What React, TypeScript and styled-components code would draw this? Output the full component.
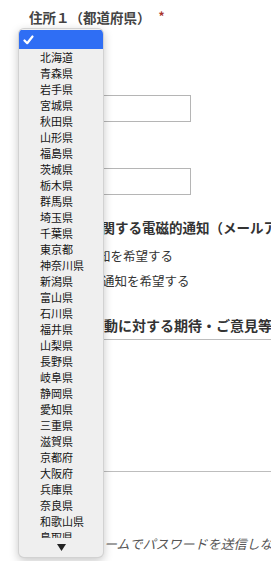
import styled, { createGlobalStyle } from 'styled-components'

const GlobalStyle = createGlobalStyle`
  html, body {
    margin: 0;
    padding: 0;
    background: #fff;
    overflow: hidden;
  }
  body {
    font-family: "Noto Sans CJK JP", "Noto Sans", sans-serif;
    color: #333;
  }
`

const Page = styled.div`
  position: relative;
  width: 271px;
  height: 561px;
  overflow: hidden;
`

const Form = styled.form`
  display: flex;
  flex-direction: column;
  gap: 22px;
  padding: 6px 0 0 29px;
  width: 400px;
`

const Field = styled.div`
  display: flex;
  flex-direction: column;
  gap: 4px;
`

const Label = styled.div`
  font-size: 13.5px;
  line-height: 20px;
  font-weight: 700;
  color: #444;
  white-space: nowrap;
`

const Required = styled.span`
  color: #a8352b;
  font-size: 12px;
  margin-left: 8px;
  vertical-align: 2px;
`

const SelectBox = styled.div`
  width: 60px;
  height: 18px;
  border: 1px solid #bbb;
  border-radius: 4px;
  box-sizing: border-box;
`

const TextInput = styled.input`
  width: 162px;
  height: 27px;
  box-sizing: border-box;
  border: 1px solid #b5b5b5;
  background: #fff;
  padding: 0 6px;
`

const Heading = styled.div<{ $size?: number; $indent?: number }>`
  font-size: ${({ $size }) => $size ?? 13.5}px;
  line-height: 20px;
  font-weight: 700;
  color: #333;
  white-space: nowrap;
  padding-left: ${({ $indent }) => $indent ?? 0}px;
`

const Options = styled.div`
  display: flex;
  flex-direction: column;
  margin-top: 2px;
`

const Option = styled.label<{ $indent?: number }>`
  display: flex;
  align-items: center;
  height: 25px;
  font-size: 12.5px;
  color: #333;
  white-space: nowrap;
  padding-left: ${({ $indent }) => $indent ?? 0}px;
`

const Radio = styled.span`
  width: 13px;
  height: 13px;
  box-sizing: border-box;
  border: 1px solid #999;
  border-radius: 50%;
  margin-right: 4px;
  flex: none;
`

const TextArea = styled.textarea`
  width: 320px;
  height: 133px;
  box-sizing: border-box;
  border: 1px solid #bdbdbd;
  resize: none;
  background: #fff;
`

const Note = styled.div`
  font-size: 13px;
  line-height: 20px;
  font-style: italic;
  color: #555;
  white-space: nowrap;
  padding-left: 10px;
  margin-top: 16px;
`

// open native-like popup list for the prefecture select
const Menu = styled.div`
  position: absolute;
  left: 18px;
  top: 28px;
  width: 86px;
  height: 530px;
  box-sizing: border-box;
  padding: 1px 0;
  background: #efefef;
  border: 1px solid rgba(0, 0, 0, 0.12);
  border-radius: 6px;
  box-shadow: 0 3px 10px rgba(0, 0, 0, 0.22);
  display: flex;
  flex-direction: column;
  overflow: hidden;
`

const List = styled.div`
  height: 508px;
  overflow: hidden;
  display: flex;
  flex-direction: column;
`

const Item = styled.div<{ $selected?: boolean }>`
  flex: none;
  display: flex;
  align-items: center;
  height: ${({ $selected }) => ($selected ? 19 : 16)}px;
  padding-left: ${({ $selected }) => ($selected ? 4 : 21)}px;
  font-size: 11px;
  color: #151515;
  background: ${({ $selected }) => ($selected ? '#2f6ef4' : 'transparent')};
  white-space: nowrap;
`

const ScrollArrow = styled.div`
  flex: 1;
  display: flex;
  align-items: center;
  justify-content: center;
`

const prefectures = [
  '北海道', '青森県', '岩手県', '宮城県', '秋田県', '山形県', '福島県', '茨城県',
  '栃木県', '群馬県', '埼玉県', '千葉県', '東京都', '神奈川県', '新潟県', '富山県',
  '石川県', '福井県', '山梨県', '長野県', '岐阜県', '静岡県', '愛知県', '三重県',
  '滋賀県', '京都府', '大阪府', '兵庫県', '奈良県', '和歌山県', '鳥取県', '島根県',
]

export default function App() {
  return (
    <Page>
      <GlobalStyle />
      <Form>
        <Field>
          <Label>
            住所１（都道府県）<Required>*</Required>
          </Label>
          <SelectBox />
        </Field>
        <Field>
          <Label>住所２</Label>
          <TextInput />
        </Field>
        <Field>
          <Label>住所３</Label>
          <TextInput />
        </Field>
        <Field>
          <Heading $indent={5}>総会招集に関する電磁的通知（メールアドレス）</Heading>
          <Options>
            <Option $indent={2}>
              <Radio />
              メール通知を希望する
            </Option>
            <Option $indent={6}>
              <Radio />
              書面での通知を希望する
            </Option>
          </Options>
        </Field>
        <Field>
          <Heading $size={14} $indent={5}>本会の諸活動に対する期待・ご意見等</Heading>
          <TextArea />
        </Field>
        <Field>
          <Heading>パスワード</Heading>
          <Note>※このフォームでパスワードを送信しないでください。</Note>
        </Field>
      </Form>

      <Menu>
        <List>
          <Item $selected>
            <svg width="11" height="10" viewBox="0 0 11 10">
              <path d="M1.5 5.5 L4.2 8.2 L9.5 1.5" fill="none" stroke="#fff" strokeWidth="2.2" strokeLinecap="round" strokeLinejoin="round" />
            </svg>
          </Item>
          {prefectures.map(p => (
            <Item key={p}>{p}</Item>
          ))}
        </List>
        <ScrollArrow>
          <svg width="9" height="7" viewBox="0 0 9 7">
            <path d="M0 0 H9 L4.5 7 Z" fill="#222" />
          </svg>
        </ScrollArrow>
      </Menu>
    </Page>
  )
}
